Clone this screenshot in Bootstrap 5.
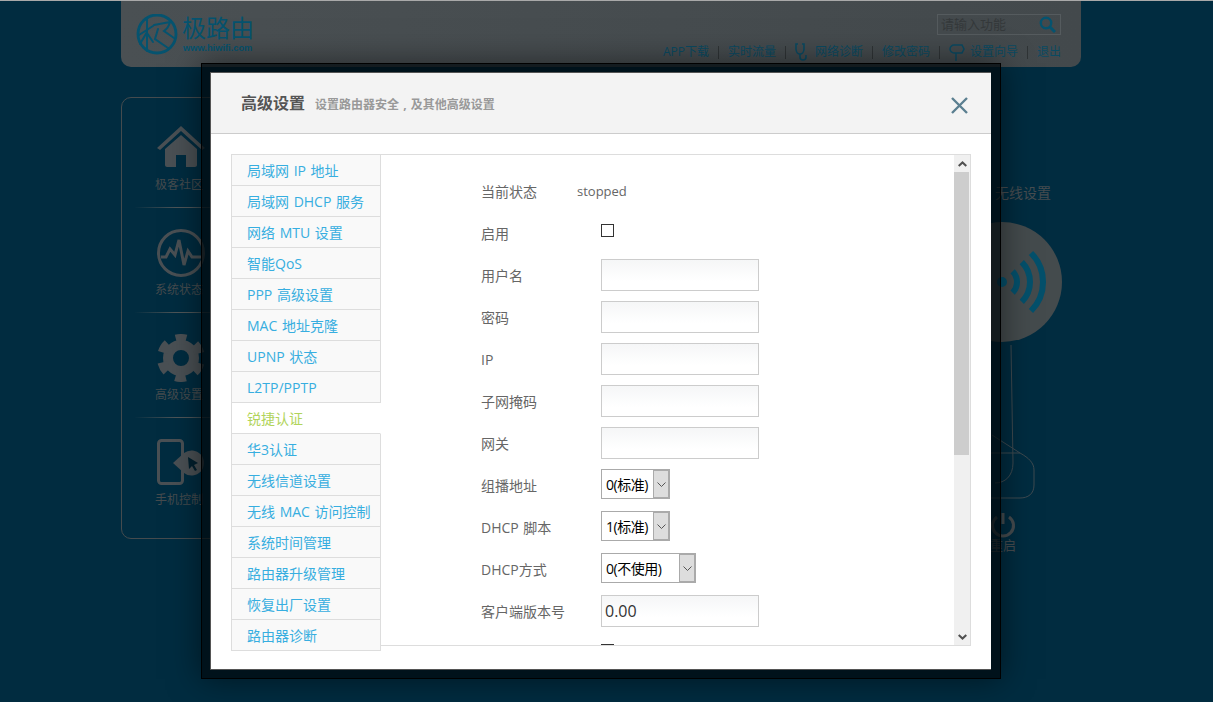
<!DOCTYPE html>
<html lang="zh">
<head>
<meta charset="utf-8">
<title>高级设置</title>
<link href="https://cdn.jsdelivr.net/npm/bootstrap@5.3.0/dist/css/bootstrap.min.css" rel="stylesheet">
<style>
html,body{height:100%;}
body{background:#012c40;overflow:hidden;font-family:"Open Sans","Noto Sans CJK SC",sans-serif;font-size:14px;color:#666;}
.topline{height:1px;background:#a9a9a9;}
.page-wrap{width:960px;margin-left:121px;}
.head-bar{height:66px;background:linear-gradient(90deg,#4a5053,#43494c);border-radius:0 0 10px 10px;padding:13px 20px 0 15px;}
.logo-cn{font-size:24px;line-height:28px;color:#05536f;}
.logo-en{font-family:"Liberation Sans",sans-serif;font-weight:700;font-size:9.300px;line-height:11px;color:#05536f;padding-left:1px;margin-top:1px;}
.search-box{width:124px;height:21px;border:1px solid #555b5e;padding:0 4px 0 3px;}
.search-hint{font-size:13px;line-height:19px;color:#35393b;}
.top-links{font-size:12px;line-height:16px;color:#0b4a62;margin-top:8px;gap:9px;}
.link-sep{width:1px;height:13px;background:#2f3436;}
.link-iconed{gap:7px;}
.link-iconed.is-tight{gap:5px;}
.side-panel{width:120px;height:442px;border:1px solid #454b4e;border-radius:10px;padding:5px 13px 0;margin-top:30px;}
.panel-entry{height:105px;border-bottom:1px solid;border-image:linear-gradient(90deg,transparent,#4f5658 45%,#4f5658 60%,transparent) 1;padding:21px 0 0 21px;}
.panel-entry:last-child{border-bottom:0;}
.panel-entry svg{margin-left:1px;display:block;}
.panel-label{font-size:12px;line-height:20px;color:#454b4e;margin:3px 0 0 -1px;white-space:nowrap;}
.wifi-col{width:120px;margin-top:30px;}
.wifi-title{margin-top:86px;padding-left:34px;font-size:14px;line-height:20px;color:#474d50;white-space:nowrap;}
.wifi-art{display:block;}
.wifi-art text{font-family:"Noto Sans CJK SC",sans-serif;font-size:13px;fill:#474d50;}
.dialog-shell{position:fixed;left:201px;top:63px;width:800px;height:616px;border:1px solid #000;padding:8px 9px 8px 8px;background:rgba(0,8,12,.72);box-shadow:0 0 30px rgba(0,0,0,.5);}
.dialog-box{height:598px;background:#fff;border:1px solid #555;border-right-width:0;}
.dialog-head{height:61px;background:#f3f3f3;border-bottom:1px solid #ccc;padding:0 23px 0 30px;}
.dialog-title{font-size:16px;font-weight:700;color:#555;margin:0;line-height:22px;}
.dialog-sub{font-size:12px;font-weight:700;color:#999;margin-left:10px;word-spacing:1px;}
.close-x{background:none;border:0;padding:0;line-height:0;margin-top:4px;}
.dialog-body{padding:20px 20px 0;}
.side-nav{width:150px;flex:none;border-top:1px solid #ddd;position:relative;z-index:1;}
.side-link{display:block;height:31px;line-height:32px;padding-left:15px;background:#f9f9f9;border:1px solid #ddd;border-top:0;color:#37aee0;text-decoration:none;white-space:nowrap;word-spacing:1px;}
.side-link.is-on{background:#fff;color:#b1d45b;border-right-color:#fff;}
.side-frame{width:590px;height:492px;border:1px solid #ddd;border-left:0;}
.frame-main{padding:16px 0 0 100px;overflow:hidden;}
.frame-bar{width:16px;flex:none;background:#f0f0f0;}
.bar-btn{height:17px;line-height:0;}
.bar-thumb{height:283px;background:#cdcdcd;width:15px;}
.form-line{height:42px;flex:none;}
.form-key{width:120px;flex:none;color:#666;line-height:20px;white-space:nowrap;word-spacing:1px;}
.form-key.is-short{width:96px;}
.form-val{font-size:13px;color:#666;line-height:18px;margin-top:-2px;}
.tick-box{appearance:none;width:13px;height:13px;margin:0 0 7px;border:1px solid #333;background:#fff;display:block;}
.text-field{width:158px;height:32px;border:1px solid #ccc;background:linear-gradient(#f5f6f7,#fff 70%);box-shadow:none;padding:0 3px;font-size:16px;color:#333;border-radius:0;margin-top:-2px;font-family:"Open Sans",sans-serif;}
.pick-wrap{height:30px;border:1px solid #aaa;background:#fff;margin-top:-4px;}
.pick-wrap select{appearance:none;border:0;background:transparent;padding:0 0 0 4px;width:51px;font-size:14px;letter-spacing:-.5px;color:#000;outline:0;font-family:"Open Sans","Noto Sans CJK SC",sans-serif;}
.pick-wrap.is-wide select{width:77px;}
.pick-arrow{width:17px;margin:-1px -1px -1px 0;background:#ddd;border:2px solid #aaa;border-left:1px solid #aaa;line-height:0;}
</style>
</head>
<body>
<div class="topline"></div>
<div class="page-wrap">
  <header class="head-bar d-flex justify-content-between">
    <div class="d-flex gap-1">
      <svg width="42" height="42" viewBox="0 0 42 42" fill="none" stroke="#05536f" stroke-width="2" stroke-linecap="round">
        <circle cx="21" cy="20" r="19" stroke-width="2.800"/>
        <path d="M3 21 17 12M11 4v33M11 18 4 30M11 19l6 9"/>
        <path d="M18 11 34 8c-1 4-3 7-6 9l10 7M22 15l-3 10 13 9"/>
      </svg>
      <div>
        <div class="logo-cn">极路由</div>
        <div class="logo-en">www.hiwifi.com</div>
      </div>
    </div>
    <div class="d-flex flex-column align-items-end">
      <div class="search-box d-flex justify-content-between align-items-center">
        <span class="search-hint">请输入功能</span>
        <svg width="17" height="17" viewBox="0 0 17 17" fill="none" stroke="#05536f"><circle cx="7" cy="7" r="5.200" stroke-width="2.400"/><path d="M11 11l5 5" stroke-width="3"/></svg>
      </div>
      <div class="top-links d-flex align-items-center">
        <span>APP下载</span><span class="link-sep"></span><span>实时流量</span><span class="link-sep"></span>
        <span class="link-iconed d-flex align-items-center">
          <svg width="13" height="18" viewBox="0 0 13 18" fill="none" stroke="#0b4a62" stroke-width="1.600"><path d="M3 1H1v5c0 3 2 5 4 5s4-2 4-5V1H7"/><path d="M5 11v3c0 2 1 3 3 3s3-1 3-3v-2"/></svg>网络诊断
        </span><span class="link-sep"></span><span>修改密码</span><span class="link-sep"></span>
        <span class="link-iconed is-tight d-flex align-items-center">
          <svg width="16" height="18" viewBox="0 0 16 18" fill="none" stroke="#0b4a62" stroke-width="1.500"><path d="M1 6c0-2 2-4 4-4h8l2 4-2 4H5C3 10 1 8 1 6zM7 10v8"/></svg>设置向导
        </span><span class="link-sep"></span><span>退出</span>
      </div>
    </div>
  </header>
  <main class="d-flex justify-content-between align-items-start">
    <nav class="side-panel">
      <div class="panel-entry">
        <svg width="48" height="48" viewBox="0 0 48 48" fill="#4a5054"><path d="M0 24 24 2l24 22-3 2-21-19L3 26z"/><path d="M8 25 24 11l16 14v16c0 1-1 2-2 2h-9V31H19v12h-9c-1 0-2-1-2-2z"/></svg>
        <div class="panel-label">极客社区</div>
      </div>
      <div class="panel-entry">
        <svg width="48" height="48" viewBox="0 0 48 48" fill="none" stroke="#4a5054"><circle cx="24" cy="24" r="22.500" stroke-width="3"/><path d="M4 28h5l4-8 5 6 4-15 5 25 4-14 4 6h9" stroke-width="3"/></svg>
        <div class="panel-label">系统状态</div>
      </div>
      <div class="panel-entry">
        <svg width="48" height="48" viewBox="0 0 48 48" fill="none" stroke="#4a5054"><circle cx="24" cy="24" r="13" stroke-width="10"/><circle cx="24" cy="24" r="19" stroke-width="10" stroke-dasharray="10 9.900" transform="rotate(-105 24 24)"/></svg>
        <div class="panel-label">高级设置</div>
      </div>
      <div class="panel-entry">
        <svg width="48" height="48" viewBox="0 0 48 48"><rect x="1.500" y="1.500" width="24" height="43" rx="3" fill="none" stroke="#4a5054" stroke-width="3"/><path d="M16 24 27 14a12.500 12.500 0 1 1 0 20z" fill="#4a5054"/><path d="M31 18l10 6-4 2 3 5-2 1-3-5-3 3z" fill="#02202e"/></svg>
        <div class="panel-label">手机控制</div>
      </div>
    </nav>
    <section class="wifi-col">
      <div class="wifi-title">无线设置</div>
      <svg class="wifi-art" width="120" height="360" viewBox="0 0 120 360" fill="none">
        <path d="M50 142l2 118c0 13-8 20-18 20M31 232l28 18c9 5 14 10 14 17v15c0 9-6 13-14 13H20M20 250h39" stroke="#3e4a50"/>
        <circle cx="41" cy="79" r="60" fill="#444b4d"/>
        <circle cx="41" cy="79" r="5" fill="#04506b"/>
        <path d="M51.600 68.400a15 15 0 0 1 0 21.200M60.800 59.200a28 28 0 0 1 0 39.600M70 50a41 41 0 0 1 0 58" stroke="#04506b" stroke-width="6"/>
        <path d="M36 314a10.500 10.500 0 1 0 12 0M42 310v11" stroke="#474d50" stroke-width="3"/>
        <text x="55" y="347" text-anchor="end">重启</text>
      </svg>
    </section>
  </main>
</div>

<div class="dialog-shell" role="dialog" aria-label="高级设置">
  <div class="dialog-box d-flex flex-column">
    <div class="dialog-head d-flex align-items-center justify-content-between">
      <div class="d-flex align-items-baseline">
        <h5 class="dialog-title">高级设置</h5>
        <span class="dialog-sub">设置路由器安全 , 及其他高级设置</span>
      </div>
      <button class="close-x" type="button" aria-label="关闭">
        <svg width="17" height="17" viewBox="0 0 17 17" stroke="#5b7f90" stroke-width="2.400"><path d="M1 1l15 15M16 1 1 16"/></svg>
      </button>
    </div>
    <div class="dialog-body d-flex align-items-start">
      <div class="side-nav">
        <a class="side-link" href="#">局域网 IP 地址</a>
        <a class="side-link" href="#">局域网 DHCP 服务</a>
        <a class="side-link" href="#">网络 MTU 设置</a>
        <a class="side-link" href="#">智能QoS</a>
        <a class="side-link" href="#">PPP 高级设置</a>
        <a class="side-link" href="#">MAC 地址克隆</a>
        <a class="side-link" href="#">UPNP 状态</a>
        <a class="side-link" href="#">L2TP/PPTP</a>
        <a class="side-link is-on" href="#">锐捷认证</a>
        <a class="side-link" href="#">华3认证</a>
        <a class="side-link" href="#">无线信道设置</a>
        <a class="side-link" href="#">无线 MAC 访问控制</a>
        <a class="side-link" href="#">系统时间管理</a>
        <a class="side-link" href="#">路由器升级管理</a>
        <a class="side-link" href="#">恢复出厂设置</a>
        <a class="side-link" href="#">路由器诊断</a>
      </div>
      <div class="side-frame d-flex">
        <form class="frame-main flex-grow-1 d-flex flex-column">
          <div class="form-line d-flex align-items-center"><span class="form-key is-short">当前状态</span><span class="form-val">stopped</span></div>
          <div class="form-line d-flex align-items-center"><span class="form-key">启用</span><input class="tick-box" type="checkbox"></div>
          <div class="form-line d-flex align-items-center"><span class="form-key">用户名</span><input class="text-field" type="text"></div>
          <div class="form-line d-flex align-items-center"><span class="form-key">密码</span><input class="text-field" type="text"></div>
          <div class="form-line d-flex align-items-center"><span class="form-key">IP</span><input class="text-field" type="text"></div>
          <div class="form-line d-flex align-items-center"><span class="form-key">子网掩码</span><input class="text-field" type="text"></div>
          <div class="form-line d-flex align-items-center"><span class="form-key">网关</span><input class="text-field" type="text"></div>
          <div class="form-line d-flex align-items-center"><span class="form-key">组播地址</span>
            <div class="pick-wrap d-flex"><select><option>0(标准)</option></select><span class="pick-arrow d-flex align-items-center justify-content-center"><svg width="9" height="5" viewBox="0 0 9 5" fill="none" stroke="#555"><path d="M.5.5l4 4 4-4"/></svg></span></div></div>
          <div class="form-line d-flex align-items-center"><span class="form-key">DHCP 脚本</span>
            <div class="pick-wrap d-flex"><select><option>1(标准)</option></select><span class="pick-arrow d-flex align-items-center justify-content-center"><svg width="9" height="5" viewBox="0 0 9 5" fill="none" stroke="#555"><path d="M.5.5l4 4 4-4"/></svg></span></div></div>
          <div class="form-line d-flex align-items-center"><span class="form-key">DHCP方式</span>
            <div class="pick-wrap is-wide d-flex"><select><option>0(不使用)</option></select><span class="pick-arrow d-flex align-items-center justify-content-center"><svg width="9" height="5" viewBox="0 0 9 5" fill="none" stroke="#555"><path d="M.5.5l4 4 4-4"/></svg></span></div></div>
          <div class="form-line d-flex align-items-center"><span class="form-key">客户端版本号</span><input class="text-field" type="text" value="0.00"></div>
          <div class="form-line d-flex align-items-center"><span class="form-key"></span><input class="tick-box" type="checkbox"></div>
        </form>
        <div class="frame-bar d-flex flex-column">
          <div class="bar-btn d-flex align-items-center justify-content-center"><svg width="9" height="6" viewBox="0 0 9 6" fill="none" stroke="#505050" stroke-width="2"><path d="M.7 5 4.500 1.400 8.300 5"/></svg></div>
          <div class="bar-thumb"></div>
          <div class="flex-grow-1"></div>
          <div class="bar-btn d-flex align-items-center justify-content-center"><svg width="9" height="6" viewBox="0 0 9 6" fill="none" stroke="#505050" stroke-width="2"><path d="M.7 1 4.500 4.600 8.300 1"/></svg></div>
        </div>
      </div>
    </div>
  </div>
</div>
<script src="https://cdn.jsdelivr.net/npm/bootstrap@5.3.0/dist/js/bootstrap.bundle.min.js"></script>
</body>
</html>
